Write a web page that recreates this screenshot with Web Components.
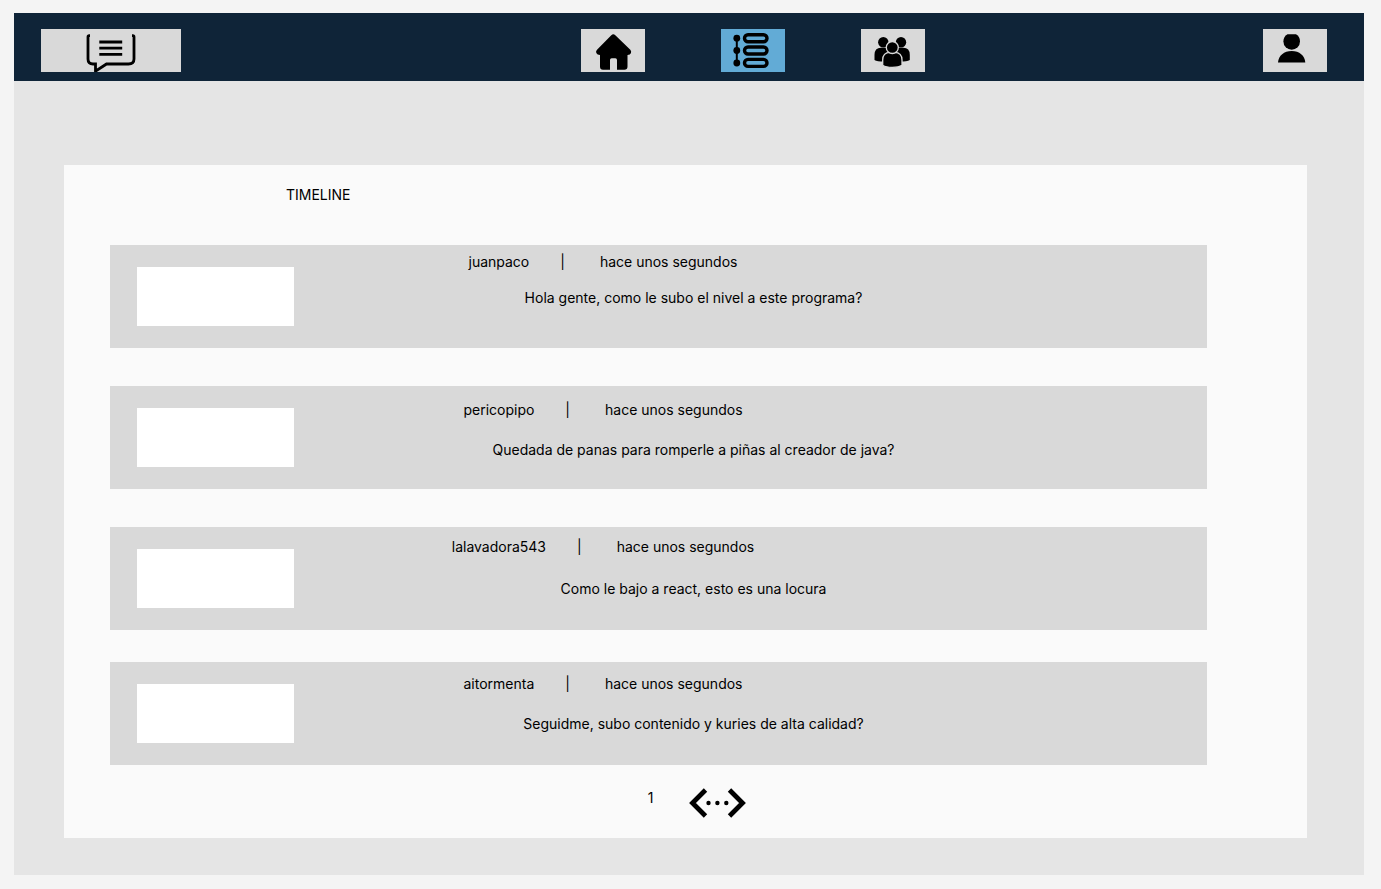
<!DOCTYPE html>
<html lang="es">
<head>
<meta charset="utf-8">
<meta name="viewport" content="width=device-width, initial-scale=1">
<title>Timeline</title>
<style>
  body {
    margin: 0;
    background: #f4f4f4;
    color: #000;
    font: 14px/20px Inter, "Liberation Sans", sans-serif;
  }
</style>
</head>
<body>
<app-shell>
  <app-header slot="header"></app-header>
  <timeline-panel heading="TIMELINE">
    <timeline-post author="juanpaco" when="hace unos segundos" density="tight">Hola gente, como le subo el nivel a este programa?</timeline-post>
    <timeline-post author="pericopipo" when="hace unos segundos" density="loose">Quedada de panas para romperle a piñas al creador de java?</timeline-post>
    <timeline-post author="lalavadora543" when="hace unos segundos" density="open">Como le bajo a react, esto es una locura</timeline-post>
    <timeline-post author="aitormenta" when="hace unos segundos">Seguidme, subo contenido y kuries de alta calidad?</timeline-post>
    <page-switcher slot="footer" page="1"></page-switcher>
  </timeline-panel>
</app-shell>

<script>
class BaseElement extends HTMLElement {
  constructor() {
    super();
    this.attachShadow({ mode: "open" });
  }
  connectedCallback() {
    this.shadowRoot.innerHTML = this.render();
  }
}

customElements.define("app-shell", class extends BaseElement {
  render() {
    return `
      <style>
        :host {
          display: flex; flex-direction: column; box-sizing: border-box;
          min-height: calc(100vh - 27px);
          margin: 13px 17px 14px 14px;
          background: #e5e5e5;
        }
        main { padding: 84px 57px 37px 50px; }
      </style>
      <slot name="header"></slot>
      <main><slot></slot></main>`;
  }
});

customElements.define("nav-tile", class extends BaseElement {
  render() {
    return `
      <style>
        :host { display: block; width: 64px; height: 43px; background: #d9d9d9; }
        :host([wide]) { width: 140px; }
        :host([active]) { background: #62abd6; }
        a { display: block; height: 100%; color: #000; }
      </style>
      <a href="${this.getAttribute("to")}" aria-label="${this.getAttribute("label")}"><slot></slot></a>`;
  }
});

customElements.define("app-header", class extends BaseElement {
  render() {
    return `
      <style>
        :host { display: block; background: #0f2438; }
        header {
          display: grid; grid-template-columns: auto 13fr auto 11fr auto;
          padding: 16px 37px 9px 27px;
        }
        nav { grid-column: 3; display: flex; gap: 76px; }
        .profile { grid-column: 5; }
        svg { display: block; }
      </style>
      <header>
        <nav-tile wide to="#inicio" label="Kuries">
          <svg width="140" height="43" viewBox="0 0 140 43" fill="none" stroke="#000" stroke-width="2.8">
            <path d="M49 6.6H48.200Q47 6.600 47 8V30Q47 35 52 35H54.500V42.200L65.500 35H87.500Q93 35 93 30V8Q93 6.600 91.800 6.600H91"/>
            <path d="M58.300 13H81.200M58.300 19.200H81.200M58.300 25.300H81.200"/>
          </svg>
        </nav-tile>
        <nav aria-label="Principal">
          <nav-tile to="#casa" label="Inicio">
            <svg width="64" height="43" viewBox="0 0 64 43">
              <path d="M30.300 6.200Q32.300 4.400 34.300 6.200L49.300 20.800Q50.600 22.300 50 24Q49.300 25.800 46.500 26V37.500Q46.500 40.700 43.300 40.700H36V31Q36 29.300 34.300 29.300H30.700Q29 29.300 29 31V40.700H22Q19 40.700 19 37.500V26Q16.200 25.800 15.300 24Q14.600 22.300 16 20.800Z"/>
            </svg>
          </nav-tile>
          <nav-tile active to="#timeline" label="Timeline">
            <svg width="64" height="43" viewBox="0 0 64 43">
              <path d="M15.800 9V34" stroke="#000" stroke-width="2"/>
              <circle cx="15.800" cy="9.200" r="3.400"/><circle cx="15.800" cy="21.500" r="3.400"/><circle cx="15.800" cy="34" r="3.400"/>
              <g fill="none" stroke="#000" stroke-width="3.400">
                <rect x="23.500" y="5.700" width="22.500" height="7" rx="3.500"/>
                <rect x="23.500" y="18" width="22.500" height="7" rx="3.500"/>
                <rect x="23.500" y="30.400" width="22.500" height="7" rx="3.500"/>
              </g>
            </svg>
          </nav-tile>
          <nav-tile to="#comunidad" label="Comunidad">
            <svg width="64" height="43" viewBox="0 0 64 43">
              <circle cx="22.300" cy="13.300" r="5.200"/><circle cx="40" cy="13.300" r="5.200"/>
              <path d="M13.500 31V26Q13.500 18.800 20 18.800H42.300Q48.800 18.800 48.800 26V31Q46 32.500 39 32.500H23Q16 32.500 13.500 31Z"/>
              <g stroke="#d9d9d9" stroke-width="1.300">
                <path d="M21.700 36.200V31Q21.700 23.500 29 23.300H33.500Q41 23.500 41 31V36.200Q38 38.300 31.300 38.300Q25 38.300 21.700 36.200Z"/>
                <circle cx="31.300" cy="18.500" r="6"/>
              </g>
            </svg>
          </nav-tile>
        </nav>
        <nav-tile class="profile" to="#perfil" label="Perfil">
          <svg width="64" height="43" viewBox="0 0 64 43">
            <path d="M24.500 5.200H33Q37 7.500 37 12.500A8.300 8.300 0 0 1 20.400 12.500Q20.400 7.500 24.500 5.200Z"/>
            <path d="M15 33.400C15.500 26.500 21 21.900 28.700 21.900S41.800 26.500 42.300 33.400Z"/>
          </svg>
        </nav-tile>
      </header>`;
  }
});

customElements.define("timeline-panel", class extends BaseElement {
  render() {
    return `
      <style>
        :host { display: block; background: #fafafa; padding: 20px 100px 20px 46px; }
        h1 { margin: 0 0 40px; padding-left: 176px; font: inherit; }
        .posts { display: flex; flex-direction: column; gap: 38px; }
        ::slotted(timeline-post:last-of-type) { margin-top: -6px; }
      </style>
      <h1>${this.getAttribute("heading")}</h1>
      <div class="posts"><slot></slot></div>
      <slot name="footer"></slot>`;
  }
});

customElements.define("timeline-post", class extends BaseElement {
  render() {
    return `
      <style>
        :host { display: block; background: #d9d9d9; --lead: 12px; --gap: 20px; }
        :host([density="tight"]) { --lead: 7px; --gap: 16px; }
        :host([density="open"]) { --lead: 10px; --gap: 22px; }
        :host([density="loose"]) { --lead: 14px; }
        article { display: grid; grid-template-columns: 157px 1fr; min-height: 103px; padding: 0 114px 0 27px; }
        .avatar { align-self: center; height: 59px; background: #fff; }
        .body { padding-top: var(--lead); text-align: center; }
        .meta { display: flex; justify-content: center; gap: 31px; padding-right: 181px; }
        .divider { padding-right: 4px; }
        p { margin: var(--gap) 0 0; }
      </style>
      <article>
        <div class="avatar"></div>
        <div class="body">
          <div class="meta">
            <span>${this.getAttribute("author")}</span>
            <span class="divider">|</span>
            <span>${this.getAttribute("when")}</span>
          </div>
          <p><slot></slot></p>
        </div>
      </article>`;
  }
});

customElements.define("page-switcher", class extends BaseElement {
  render() {
    return `
      <style>
        :host { display: flex; justify-content: center; gap: 36px; padding: 23px 0 0 77px; }
        button { display: block; margin: 0; padding: 0; border: 0; background: none; color: inherit; }
        svg { display: block; }
      </style>
      <span>${this.getAttribute("page")}</span>
      <button type="button" aria-label="Cambiar de página">
        <svg width="57" height="30" viewBox="0 0 57 30">
          <path d="M16.500 2L3.500 15L16.500 28M40.500 2L53.500 15L40.500 28" fill="none" stroke="#000" stroke-width="4.800"/>
          <circle cx="19.500" cy="15" r="2.200"/><circle cx="28.400" cy="15" r="2.200"/><circle cx="37.300" cy="15" r="2.200"/>
        </svg>
      </button>`;
  }
});
</script>
</body>
</html>
